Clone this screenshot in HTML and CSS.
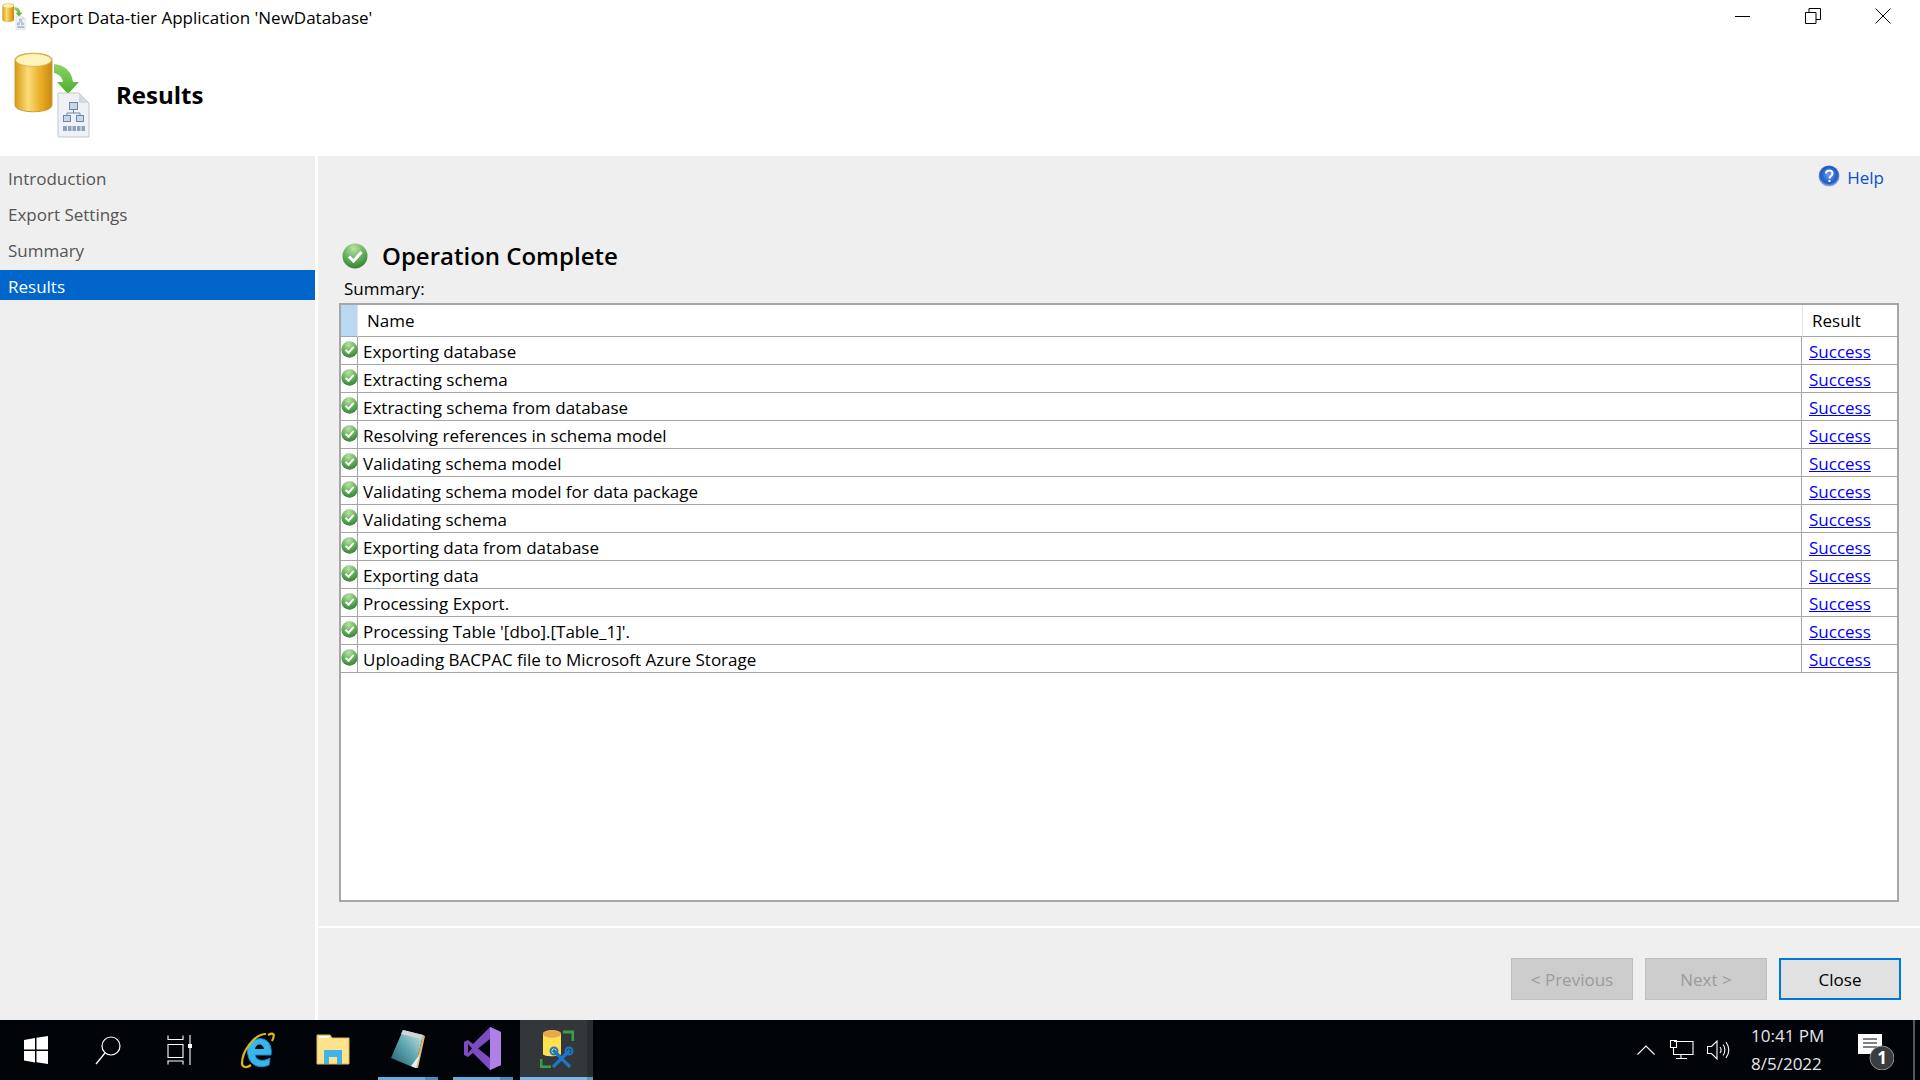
FILE: index.html
```html
<!DOCTYPE html>
<html lang="en">
<head>
    <meta charset="UTF-8">
    <title>Export Data-tier Application 'NewDatabase'</title>
    <link rel="stylesheet" href="styles.css">
</head>
<body>

    <svg class="defs" width="0" height="0">
        <defs>
            <linearGradient id="gold" x1="0" x2="1" y1="0" y2="0">
                <stop offset="0" stop-color="#d99a12"/>
                <stop offset="0.35" stop-color="#fbdc7a"/>
                <stop offset="0.7" stop-color="#e9ad25"/>
                <stop offset="1" stop-color="#c98a10"/>
            </linearGradient>
            <linearGradient id="arrow" x1="0" x2="0" y1="0" y2="1">
                <stop offset="0" stop-color="#8fd36a"/>
                <stop offset="1" stop-color="#49ad2c"/>
            </linearGradient>
            <radialGradient id="okball" cx="0.45" cy="0.2" r="0.9">
                <stop offset="0" stop-color="#b9e2a6"/>
                <stop offset="0.5" stop-color="#62b057"/>
                <stop offset="1" stop-color="#2a7430"/>
            </radialGradient>
            <radialGradient id="helpball" cx="0.5" cy="0.45" r="0.55">
                <stop offset="0" stop-color="#6aa2ef"/>
                <stop offset="0.72" stop-color="#1f57c4"/>
                <stop offset="1" stop-color="#9dbbe4"/>
            </radialGradient>
            <linearGradient id="page" x1="0" x2="1" y1="1" y2="0">
                <stop offset="0" stop-color="#1f5b68"/>
                <stop offset="0.5" stop-color="#5da5ae"/>
                <stop offset="1" stop-color="#d3e8ea"/>
            </linearGradient>

            <symbol id="ok" viewBox="0 0 26 26">
                <circle cx="13" cy="13" r="12.500" fill="url(#okball)"/>
                <path d="M7 13.500l4.500 4.500L19.500 9" fill="none" stroke="#fff" stroke-width="3"/>
            </symbol>

            <symbol id="export" viewBox="10 51 84 90">
                <path d="M15 60c0-9 37-9 37 0v45c0 9-37 9-37 0z" fill="url(#gold)" stroke="#c99a3a"/>
                <ellipse cx="33.500" cy="60" rx="18" ry="6.500" fill="#fdf3bb" stroke="#e0b64c"/>
                <path d="M54 64c12 1 18 9 19 18h6L68 94 57 82h6c-1-5-4-8-9-9z" fill="url(#arrow)"/>
                <path d="M58 93h21l10 10v34H58z" fill="#eef1f5" stroke="#c3c8cf"/>
                <path d="M79 93v10h10z" fill="#d5d9df"/>
                <g fill="#c4d6ea" stroke="#6f87a3">
                    <rect x="69.500" y="102.500" width="8" height="7"/>
                    <rect x="63.500" y="115.500" width="7" height="6"/>
                    <rect x="76.500" y="115.500" width="7" height="6"/>
                </g>
                <path d="M73.500 110v3M67 115v-2h13v2" fill="none" stroke="#6f87a3"/>
                <rect x="63" y="126" width="22" height="5" fill="#8ea3ba"/>
                <path d="M67.500 126v5M72 126v5M76.500 126v5M81 126v5" stroke="#eef1f5"/>
            </symbol>
        </defs>
    </svg>

    <div class="window">
        <div class="titlebar">
            <div class="title">
                <svg class="title-icon"><use href="#export"/></svg>
                <span>Export Data-tier Application 'NewDatabase'</span>
            </div>
            <div class="win-buttons">
                <svg width="16" height="16" viewBox="0 0 16 16"><path d="M0 8.500h15" stroke="#000" fill="none"/></svg>
                <svg width="16" height="16" viewBox="0 0 16 16"><path d="M.5 4.500h10.500v11H.5zM4 4.500V.5h11.500v11H11" stroke="#000" fill="none"/></svg>
                <svg width="16" height="16" viewBox="0 0 16 16"><path d="M.5.5l15 15M15.500.5l-15 15" stroke="#000" fill="none"/></svg>
            </div>
        </div>

        <div class="banner">
            <svg class="banner-icon"><use href="#export"/></svg>
            <h1>Results</h1>
        </div>

        <div class="main">
            <nav class="sidebar">
                <div class="nav-item">Introduction</div>
                <div class="nav-item">Export Settings</div>
                <div class="nav-item">Summary</div>
                <div class="nav-item active">Results</div>
            </nav>

            <div class="content">
                <div class="body">
                    <div class="help-row">
                        <svg width="22" height="22" viewBox="0 0 22 22">
                            <circle cx="11" cy="11" r="10.500" fill="url(#helpball)"/>
                            <path d="M8 8.500c0-4 6.500-4 6.500 0 0 2.500-3 2.500-3 5" fill="none" stroke="#fff" stroke-width="2"/>
                            <rect x="10.500" y="15" width="2" height="2" fill="#fff"/>
                        </svg>
                        <a class="help-link">Help</a>
                    </div>

                    <div class="status">
                        <svg width="26" height="26"><use href="#ok"/></svg>
                        <h2>Operation Complete</h2>
                    </div>
                    <div class="summary-label">Summary:</div>

                    <div class="grid">
                        <table>
                            <colgroup>
                                <col class="col-icon">
                                <col>
                                <col class="col-result">
                            </colgroup>
                            <thead>
                                <tr>
                                    <th class="head-icon"></th>
                                    <th class="head-name">Name</th>
                                    <th class="head-result">Result</th>
                                </tr>
                            </thead>
                            <tbody>
                                <tr><td><svg class="row-ok"><use href="#ok"/></svg></td><td>Exporting database</td><td><a>Success</a></td></tr>
                                <tr><td><svg class="row-ok"><use href="#ok"/></svg></td><td>Extracting schema</td><td><a>Success</a></td></tr>
                                <tr><td><svg class="row-ok"><use href="#ok"/></svg></td><td>Extracting schema from database</td><td><a>Success</a></td></tr>
                                <tr><td><svg class="row-ok"><use href="#ok"/></svg></td><td>Resolving references in schema model</td><td><a>Success</a></td></tr>
                                <tr><td><svg class="row-ok"><use href="#ok"/></svg></td><td>Validating schema model</td><td><a>Success</a></td></tr>
                                <tr><td><svg class="row-ok"><use href="#ok"/></svg></td><td>Validating schema model for data package</td><td><a>Success</a></td></tr>
                                <tr><td><svg class="row-ok"><use href="#ok"/></svg></td><td>Validating schema</td><td><a>Success</a></td></tr>
                                <tr><td><svg class="row-ok"><use href="#ok"/></svg></td><td>Exporting data from database</td><td><a>Success</a></td></tr>
                                <tr><td><svg class="row-ok"><use href="#ok"/></svg></td><td>Exporting data</td><td><a>Success</a></td></tr>
                                <tr><td><svg class="row-ok"><use href="#ok"/></svg></td><td>Processing Export.</td><td><a>Success</a></td></tr>
                                <tr><td><svg class="row-ok"><use href="#ok"/></svg></td><td>Processing Table '[dbo].[Table_1]'.</td><td><a>Success</a></td></tr>
                                <tr><td><svg class="row-ok"><use href="#ok"/></svg></td><td>Uploading BACPAC file to Microsoft Azure Storage</td><td><a>Success</a></td></tr>
                            </tbody>
                        </table>
                    </div>
                </div>

                <div class="footer">
                    <button class="btn" disabled>&lt; Previous</button>
                    <button class="btn" disabled>Next &gt;</button>
                    <button class="btn primary">Close</button>
                </div>
            </div>
        </div>
    </div>

    <div class="taskbar">
        <div class="tb-left">
            <div class="tb-btn">
                <svg width="24" height="28" viewBox="0 0 24 28"><path d="M0 4l11-2v11.500H0zM12.500 1.800L24 0v13.500H12.500zM0 15h11v11.500L0 24.500zM12.500 15H24v13l-11.500-1.800z" fill="#fff"/></svg>
            </div>
            <div class="tb-btn">
                <svg width="30" height="30" viewBox="0 0 30 30"><circle cx="18" cy="11" r="9" fill="none" stroke="#fff" stroke-width="1.200"/><path d="M12 18L3 29" stroke="#fff" stroke-width="1.300"/></svg>
            </div>
            <div class="tb-btn">
                <svg width="26" height="30" viewBox="0 0 26 30"><path d="M1 .5v4h15v-4M1 9.500h15v13H1zM1 29.500v-3.500h15v3.500M23 0v30" fill="none" stroke="#fff" stroke-width="1.100"/><rect x="21" y="9" width="4" height="4" fill="#fff"/></svg>
            </div>
            <div class="tb-spacer"></div>
            <div class="tb-btn wide">
                <svg width="36" height="42" viewBox="0 0 36 42">
                    <path d="M8 27C5 16 15 9 23 11c7 2 9 9 8 16H15c1 6 9 7 15 3l-1 7c-9 4-19 1-21-10z" fill="#38b6ea" stroke="#1f8cc8" stroke-width="1"/>
                    <path d="M15 21h9c-1-6-8-6-9 0z" fill="#010409"/>
                    <path d="M28 7c8-4 6 2 4 6M26 6C14 6 2 24 2 35c0 5 5 5 9 2" fill="none" stroke="#e3b31b" stroke-width="2.200"/>
                </svg>
                <div class="tb-bar-space"></div>
            </div>
            <div class="tb-btn wide">
                <svg width="34" height="32" viewBox="0 0 34 32">
                    <path d="M1 2h13l2 3h17v26H1z" fill="#ffe38c" stroke="#d9b95c"/>
                    <path d="M3 4h10" stroke="#fff" stroke-width="2"/>
                    <path d="M8 31V17h18v14h-5v-7h-8v7z" fill="#41b3e6"/>
                </svg>
                <div class="tb-bar-space"></div>
            </div>
            <div class="tb-btn wide">
                <svg width="34" height="38" viewBox="0 0 34 38">
                    <path d="M12 0l20 5-8 33L0 28z" fill="url(#page)"/>
                    <path d="M32 5l2 1-7 32h-3z" fill="#d9b878"/>
                    <path d="M12 0l20 5-1 4-21-5z" fill="#cfd6d8"/>
                    <path d="M20 36l9-12-4 14z" fill="#e8eef0"/>
                </svg>
                <div class="tb-bar"></div>
            </div>
            <div class="tb-btn wide">
                <svg width="37" height="43" viewBox="0 0 37 43">
                    <path d="M26 0l11 5v33l-11 5L9 26l-5 4-4-2V15l4-2 5 4z" fill="#7d4cc0"/>
                    <path d="M26 0l11 5v33l-11 5z" fill="#b07fe8"/>
                    <path d="M26 12v19l-12-9.500zM4 17v9l4-4.500z" fill="#010409"/>
                </svg>
                <div class="tb-bar"></div>
            </div>
            <div class="tb-btn wide active">
                <svg width="34" height="38" viewBox="0 0 34 38">
                    <path d="M3 4c0-5 18-5 18 0v20c0 3-18 3-18 0z" fill="#ffe050"/>
                    <ellipse cx="12" cy="4" rx="9" ry="3.800" fill="#eaa84c"/>
                    <path d="M23 2h10v9M1 29v8h10" fill="none" stroke="#38a048" stroke-width="3"/>
                    <path d="M13 20l17 17M30 20L13 37" stroke="#1b78c8" stroke-width="3.200"/>
                    <circle cx="14" cy="21" r="3.500" fill="none" stroke="#1b78c8" stroke-width="2"/>
                    <circle cx="29" cy="21" r="3.500" fill="none" stroke="#1b78c8" stroke-width="2"/>
                </svg>
                <div class="tb-bar"></div>
            </div>
        </div>

        <div class="tray">
            <svg class="tray-chevron" width="18" height="10" viewBox="0 0 18 10"><path d="M.5 9.500L9 1l8.500 8.500" fill="none" stroke="#fff" stroke-width="1.100"/></svg>
            <svg class="tray-net" width="24" height="20" viewBox="0 0 24 20"><path d="M4 1.500h19v13H8M11 14.500v4M6 18.500h11M.5.500h6v7h-6zM3.500 8v6.500H8" fill="none" stroke="#fff" stroke-width="1.100"/></svg>
            <svg class="tray-vol" width="23" height="20" viewBox="0 0 23 20"><path d="M.5 6.500h4L10 1v18l-5.500-5.500h-4zM13 7c1.500 2 1.500 4 0 6M16 4.500c2.500 3 2.500 8 0 11M19 2c3.500 5 3.500 11 0 16" fill="none" stroke="#fff" stroke-width="1.100"/></svg>
            <div class="clock">
                <div>10:41 PM</div>
                <div>8/5/2022</div>
            </div>
            <div class="notif">
                <svg width="36" height="36" viewBox="0 0 36 36">
                    <path d="M0 0h24v20h-3l3 5-10-5H0z" fill="#fff"/>
                    <path d="M5 5h14M5 9h14M5 13h14" stroke="#010409"/>
                    <circle cx="24" cy="24" r="12" fill="#3b3c3e" stroke="#8f9092"/>
                    <text class="notif-count" x="24" y="30" text-anchor="middle">1</text>
                </svg>
            </div>
            <div class="tray-edge"></div>
        </div>
    </div>

</body>
</html>
```

FILE: styles.css
```css
* {
    box-sizing: border-box;
}

html, body {
    margin: 0;
    padding: 0;
    height: 100%;
}

body {
    width: 1920px;
    height: 1080px;
    overflow: hidden;
    display: flex;
    flex-direction: column;
    background: #fff;
    color: #000;
    font-family: "Open Sans", "Noto Sans", sans-serif;
    font-size: 17px;
}

.defs {
    position: absolute;
}

.window {
    flex: 1;
    display: flex;
    flex-direction: column;
    min-height: 0;
}

.titlebar {
    height: 36px;
    display: flex;
    justify-content: space-between;
    align-items: flex-start;
}

.title {
    display: flex;
    align-items: center;
    gap: 4px;
    padding: 3px 0 0 1px;
    height: 31px;
    font-size: 17px;
}

.title-icon {
    width: 26px;
    height: 28px;
}

.win-buttons {
    display: flex;
    gap: 54px;
    padding: 8px 29px 0 0;
}

.banner {
    height: 120px;
    display: flex;
    align-items: center;
    gap: 22px;
    padding-left: 10px;
}

.banner-icon {
    width: 84px;
    height: 90px;
}

h1 {
    margin: 0 0 3px;
    font-size: 24px;
    font-weight: 700;
}

.main {
    flex: 1;
    display: flex;
    gap: 3px;
    min-height: 0;
}

.sidebar {
    flex: none;
    width: 315px;
    background: #efefef;
    display: flex;
    flex-direction: column;
    gap: 6px;
    padding-top: 6px;
}

.nav-item {
    height: 30px;
    line-height: 33px;
    padding-left: 8px;
    color: #555;
}

.nav-item.active {
    background: #0066cc;
    color: #fff;
}

.content {
    flex: 1;
    min-width: 0;
    display: flex;
    flex-direction: column;
    background: #efefef;
}

.body {
    height: 772px;
    border-bottom: 2px solid #fff;
    padding: 0 21px 0 21px;
    display: flex;
    flex-direction: column;
}

.help-row {
    display: flex;
    justify-content: flex-end;
    align-items: center;
    gap: 7px;
    height: 40px;
    padding: 0 15px 0 0;
}

.help-link {
    color: #0a50d0;
    padding-top: 2px;
}

.status {
    display: flex;
    align-items: center;
    gap: 14px;
    margin-top: 47px;
    padding-left: 3px;
    height: 26px;
}

h2 {
    margin: 0 0 1px;
    font-size: 24px;
    font-weight: 600;
}

.summary-label {
    padding-left: 5px;
    height: 34px;
    line-height: 40px;
}

.grid {
    width: 1560px;
    height: 599px;
    background: #fff;
    border: 2px solid #a6a6a6;
}

table {
    width: 100%;
    border-collapse: separate;
    border-spacing: 0;
    table-layout: fixed;
}

.col-icon {
    width: 17px;
}

.col-result {
    width: 95px;
}

th {
    height: 32px;
    padding: 0;
    font-weight: 400;
    text-align: left;
    border-bottom: 1px solid #a6a6a6;
}

.head-icon {
    background: #b9d9f2;
    border-right: 1px solid #e4e4e4;
}

.head-name {
    padding-left: 9px;
}

.head-result {
    padding-left: 9px;
    border-left: 1px solid #e4e4e4;
}

td {
    height: 28px;
    padding: 2px 0 0 5px;
    border-bottom: 1px solid #a6a6a6;
    border-right: 1px solid #a6a6a6;
    white-space: nowrap;
}

td:first-child {
    padding: 0;
}

td:last-child {
    border-right: none;
    padding-left: 7px;
    padding-top: 1px;
}

td a {
    color: #0000ff;
    text-decoration: underline;
}

.row-ok {
    display: block;
    width: 17px;
    height: 17px;
    margin-top: -3px;
}

.footer {
    flex: 1;
    display: flex;
    justify-content: flex-end;
    gap: 12px;
    padding: 30px 19px 0 0;
}

.btn {
    width: 122px;
    height: 42px;
    font: inherit;
    padding: 0;
    background: #e1e1e1;
    color: #000;
    border: 2px solid #0078d7;
}

.btn:disabled {
    background: #cccccc;
    color: #9b9b9b;
    border: 1px solid #bfbfbf;
}

.taskbar {
    height: 60px;
    background: #010409;
    display: flex;
    justify-content: space-between;
    color: #fff;
}

.tb-left {
    display: flex;
}

.tb-btn {
    width: 72px;
    display: flex;
    flex-direction: column;
    align-items: center;
    justify-content: center;
}

.tb-spacer {
    width: 4px;
}

.tb-btn.wide {
    width: 75px;
    justify-content: flex-end;
}

.tb-btn.wide svg {
    margin-bottom: auto;
    margin-top: auto;
}

.tb-bar,
.tb-bar-space {
    width: 60px;
    height: 3px;
    flex: none;
}

.tb-bar {
    background: linear-gradient(to right, #64aee6 78%, #4b8dbf 78%);
}

.tb-btn.active {
    width: 73px;
    background: linear-gradient(to right, #33373a 92%, #292c2f 92%);
}

.tb-btn.active .tb-bar {
    width: 100%;
    background: linear-gradient(to right, #79b8ea 92%, #5f95c0 92%);
}

.tray {
    display: flex;
    align-items: center;
}

.tray-chevron {
    margin-right: 15px;
}

.tray-net {
    margin-right: 13px;
}

.tray-vol {
    margin-right: 21px;
}

.clock {
    width: 74px;
    margin-right: 33px;
    font-size: 17px;
    line-height: 28px;
    color: #e6e6e6;
    white-space: nowrap;
}

.notif {
    width: 36px;
    height: 36px;
    margin-right: 19px;
    margin-top: 4px;
}

.notif-count {
    fill: #fff;
    font-size: 17px;
    font-weight: 700;
    font-family: "Open Sans", sans-serif;
}

.tray-edge {
    width: 2px;
    height: 60px;
    background: #55585c;
    margin-right: 5px;
}
```
